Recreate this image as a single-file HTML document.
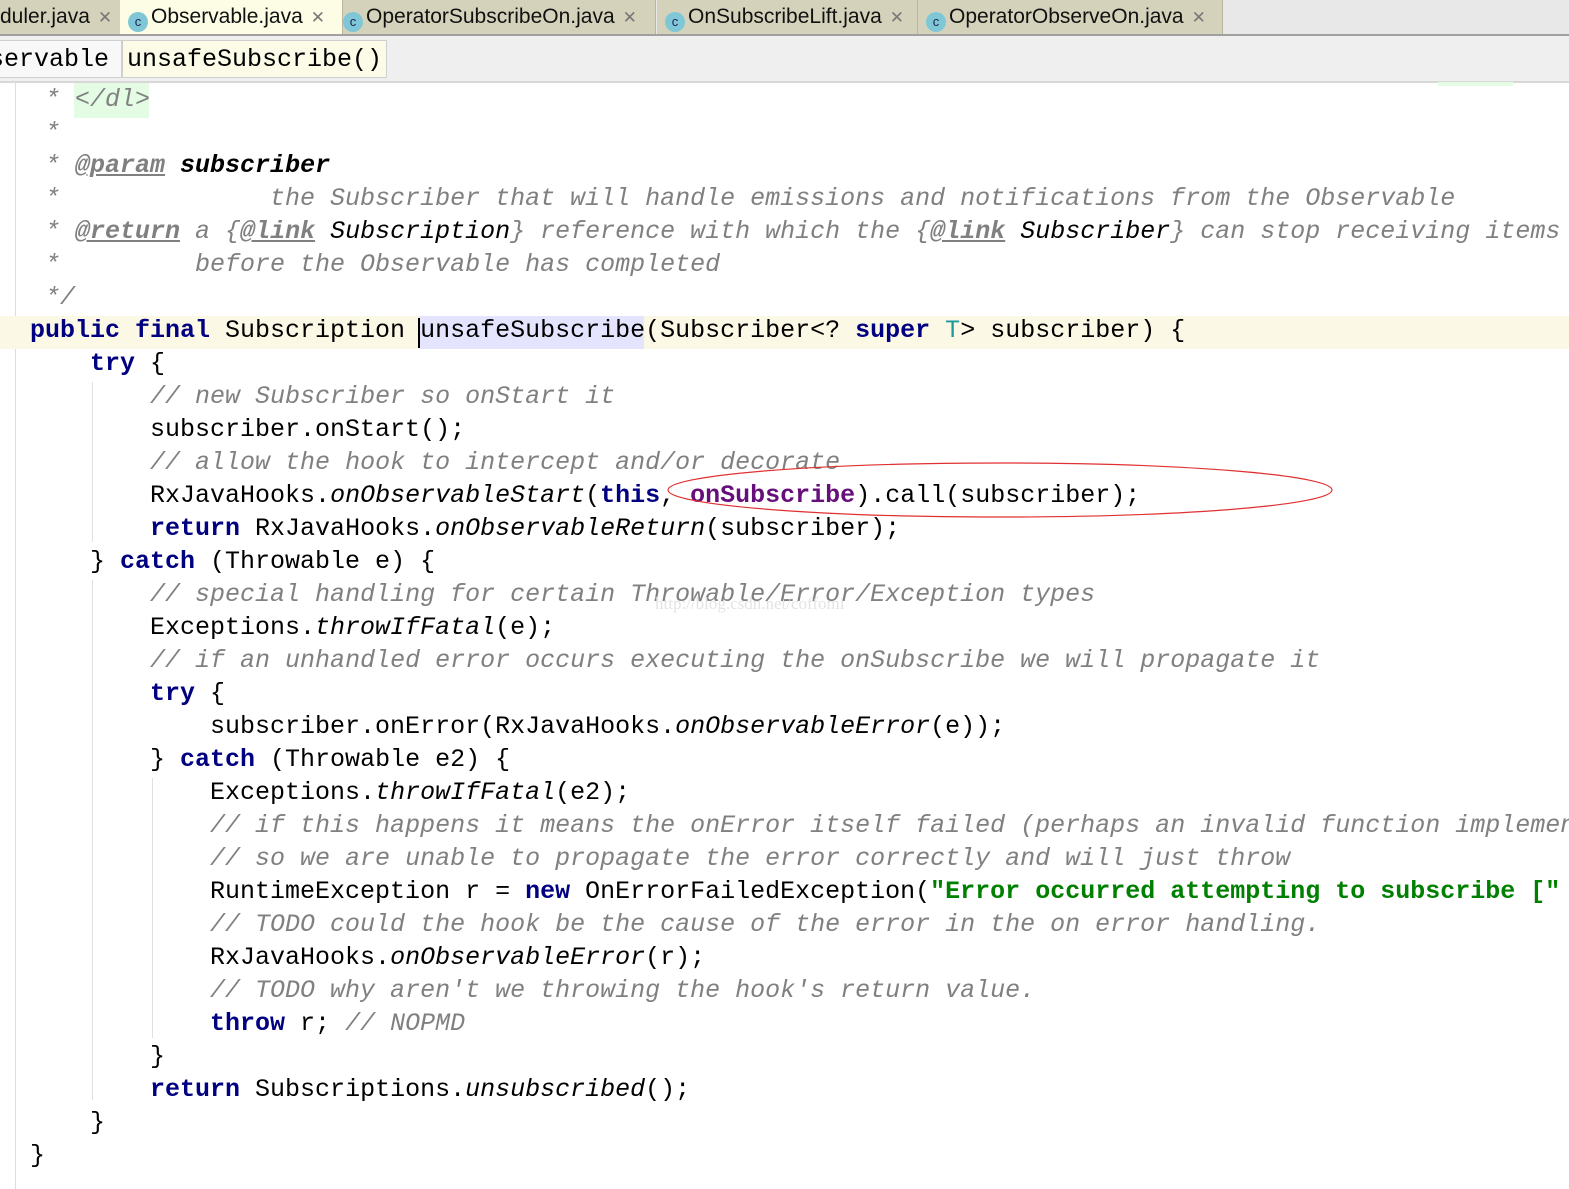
<!DOCTYPE html>
<html><head><meta charset="utf-8"><style>
body{margin:0;width:1569px;height:1189px;overflow:hidden;background:#fff;position:relative;font-family:"Liberation Mono",monospace}
.tabs{position:absolute;left:0;top:0;width:1569px;height:34px;background:#e8e8e8;border-bottom:2px solid #a0a0a0}
.tab{position:absolute;top:0;height:34px;background:#d5d2bb;border-right:1px solid #b9b6a0;font-family:"Liberation Sans",sans-serif;font-size:21px;line-height:34px;color:#111;white-space:nowrap;overflow:hidden}
.tab .x{color:#777;font-size:17px;margin-left:8px}
.ic{display:inline-block;width:20px;height:20px;border-radius:50%;background:#7fc7d6;vertical-align:-3px;margin-right:3px;font-size:13px;line-height:20px;text-align:center;color:#225}
.crumbs{position:absolute;left:0;top:36px;width:1569px;height:45px;background:#efefef;border-bottom:2px solid #d8d8d8}
.cb{position:absolute;top:4px;height:36px;border:1px solid #cfcfcf;background:#f8f8f8;font-size:25px;line-height:38px;padding:0 4px;color:#000}
.code{position:absolute;left:30px;top:83px;width:1539px;overflow:hidden;font-size:25px;line-height:33px;white-space:pre;color:#000}
.c{color:#808080;font-style:italic}
.k{color:#000080;font-weight:bold}
.s{color:#008000;font-weight:bold}
.i{font-style:italic}
.t{color:#808080;font-style:italic;text-decoration:underline;font-weight:bold}
.d{font-style:italic;color:#3d3d3d}
.p{color:#660e7a;font-weight:bold}
</style></head><body>
<div class="tabs">
<div class="tab" style="left:-2px;width:120px;padding-left:2px">duler.java<span class="x">✕</span></div>
<div class="tab" style="left:120px;width:214px;background:#fdfde6;padding-left:8px"><span class="ic">c</span>Observable.java<span class="x">✕</span></div>
<div class="tab" style="left:343px;width:312px;padding-left:0"><span class="ic">c</span>OperatorSubscribeOn.java<span class="x">✕</span></div>
<div class="tab" style="left:657px;width:252px;padding-left:8px"><span class="ic">c</span>OnSubscribeLift.java<span class="x">✕</span></div>
<div class="tab" style="left:918px;width:296px;padding-left:8px"><span class="ic">c</span>OperatorObserveOn.java<span class="x">✕</span></div>
</div>
<div class="crumbs">
<div class="cb" style="left:-16px;width:128px">servable</div>
<div class="cb" style="left:122px;background:#fbfbe8">unsafeSubscribe()</div>
</div>
<div style="position:absolute;left:15px;top:82px;width:1px;height:1107px;background:#ddd"></div>
<div style="position:absolute;left:0;top:316px;width:1569px;height:33px;background:#fcf8e6"></div>
<div style="position:absolute;left:419px;top:316px;width:225px;height:33px;background:#e4e4ff"></div>
<div style="position:absolute;left:418px;top:318px;width:2px;height:30px;background:#000"></div>
<div style="position:absolute;left:92px;top:382px;width:1px;height:160px;background:#e0e0e0"></div>
<div style="position:absolute;left:92px;top:580px;width:1px;height:520px;background:#e0e0e0"></div>
<div style="position:absolute;left:152px;top:778px;width:1px;height:260px;background:#e0e0e0"></div>
<div style="position:absolute;left:74px;top:83px;width:75px;height:35px;background:#e4fce4"></div>
<div style="position:absolute;left:1438px;top:82px;width:75px;height:4px;background:#e4fce4"></div>
<div class="code"><span class="c"> * &lt;/dl&gt;</span>
<span class="c"> *</span>
<span class="c"> * </span><span class="t">@param</span> <span class="d" style="font-weight:bold;color:#000">subscriber</span>
<span class="c"> *              the Subscriber that will handle emissions and notifications from the Observable</span>
<span class="c"> * </span><span class="t">@return</span><span class="c"> a {</span><span class="t">@link</span> <span class="d" style="color:#000">Subscription</span><span class="c">} reference with which the {</span><span class="t">@link</span> <span class="d" style="color:#000">Subscriber</span><span class="c">} can stop receiving items</span>
<span class="c"> *         before the Observable has completed</span>
<span class="c"> */</span>
<span class="k">public final</span> Subscription unsafeSubscribe(Subscriber&lt;? <span class="k">super</span> <span style="color:#20999d">T</span>&gt; subscriber) {
    <span class="k">try</span> {
        <span class="c">// new Subscriber so onStart it</span>
        subscriber.onStart();
        <span class="c">// allow the hook to intercept and/or decorate</span>
        RxJavaHooks.<span class="i">onObservableStart</span>(<span class="k">this</span>, <span class="p">onSubscribe</span>).call(subscriber);
        <span class="k">return</span> RxJavaHooks.<span class="i">onObservableReturn</span>(subscriber);
    } <span class="k">catch</span> (Throwable e) {
        <span class="c">// special handling for certain Throwable/Error/Exception types</span>
        Exceptions.<span class="i">throwIfFatal</span>(e);
        <span class="c">// if an unhandled error occurs executing the onSubscribe we will propagate it</span>
        <span class="k">try</span> {
            subscriber.onError(RxJavaHooks.<span class="i">onObservableError</span>(e));
        } <span class="k">catch</span> (Throwable e2) {
            Exceptions.<span class="i">throwIfFatal</span>(e2);
            <span class="c">// if this happens it means the onError itself failed (perhaps an invalid function implementation)</span>
            <span class="c">// so we are unable to propagate the error correctly and will just throw</span>
            RuntimeException r = <span class="k">new</span> OnErrorFailedException(<span class="s">"Error occurred attempting to subscribe ["</span>
            <span class="c">// TODO could the hook be the cause of the error in the on error handling.</span>
            RxJavaHooks.<span class="i">onObservableError</span>(r);
            <span class="c">// TODO why aren't we throwing the hook's return value.</span>
            <span class="k">throw</span> r; <span class="c">// NOPMD</span>
        }
        <span class="k">return</span> Subscriptions.<span class="i">unsubscribed</span>();
    }
}</div>
<div style="position:absolute;left:655px;top:594px;font-family:'Liberation Serif',serif;font-size:17px;color:#e4e4e4">http://blog.csdn.net/coffomi</div>
<svg style="position:absolute;left:0;top:0" width="1569" height="1189"><ellipse cx="1000" cy="490" rx="332" ry="27" fill="none" stroke="#e03030" stroke-width="1.2"/></svg>
</body></html>
